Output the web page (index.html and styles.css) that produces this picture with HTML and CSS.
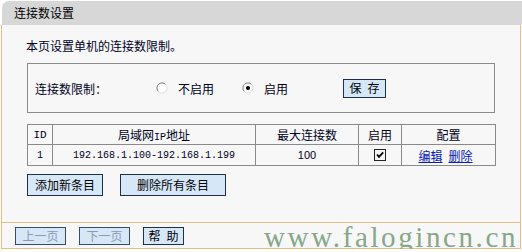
FILE: index.html
```html
<!DOCTYPE html>
<html lang="zh-CN">
<head>
<meta charset="utf-8">
<title>连接数设置</title>
<link rel="stylesheet" href="styles.css">
</head>
<body>
<div class="frame">
  <div class="title">连接数设置</div>
  <div class="main">
    <div class="content">
      <p class="desc">本页设置单机的连接数限制。</p>
      <div class="box">
        <span class="lbl">连接数限制：</span>
        <svg class="radio" width="12" height="12" viewBox="0 0 12 12"><circle cx="6" cy="6" r="5" fill="#fff"/><path d="M2.4 9.6 A5 5 0 0 1 9.6 2.4" stroke="#7a7a7a" fill="none"/><path d="M9.6 2.4 A5 5 0 0 1 2.4 9.6" stroke="#dcdcdc" fill="none"/></svg>
        <span class="opt">不启用</span>
        <svg class="radio radio-2" width="12" height="12" viewBox="0 0 12 12"><circle cx="6" cy="6" r="5" fill="#fff"/><path d="M2.4 9.6 A5 5 0 0 1 9.6 2.4" stroke="#7a7a7a" fill="none"/><path d="M9.6 2.4 A5 5 0 0 1 2.4 9.6" stroke="#dcdcdc" fill="none"/><circle cx="6" cy="6" r="2" fill="#000"/></svg>
        <span class="opt">启用</span>
        <button class="btn save">保&ensp;存</button>
      </div>
      <table class="grid">
        <colgroup><col class="c1"><col class="c2"><col class="c3"><col class="c4"><col class="c5"></colgroup>
        <tr class="head">
          <td class="mono id">ID</td>
          <td>局域网<span class="mono">IP</span>地址</td>
          <td>最大连接数</td>
          <td>启用</td>
          <td>配置</td>
        </tr>
        <tr class="row">
          <td class="mono">1</td>
          <td class="mono">192.168.1.100-192.168.1.199</td>
          <td class="num">100</td>
          <td><svg class="check" width="12" height="12" viewBox="0 0 12 12"><rect x="0.5" y="0.5" width="11" height="11" fill="#f4f4f4" stroke="#222"/><path d="M3 5.5 L5 7.8 L9.2 3.4" stroke="#000" stroke-width="1.8" fill="none"/></svg></td>
          <td class="cfg"><a href="#" class="lnk">编辑</a><a href="#" class="lnk lnk-2">删除</a></td>
        </tr>
      </table>
      <div class="actions">
        <button class="btn add">添加新条目</button>
        <button class="btn delall">删除所有条目</button>
      </div>
    </div>
    <div class="footer">
      <button class="btn fbtn off">上一页</button>
      <button class="btn fbtn off">下一页</button>
      <button class="btn fbtn help">帮&ensp;助</button>
      <span class="wm">www.falogincn.cn</span>
    </div>
  </div>
</div>
</body>
</html>
```
FILE: styles.css
```css
html, body {
  margin: 0;
  padding: 0;
  background: #fff;
}
body {
  font-family: "Noto Sans CJK SC", "Liberation Sans", sans-serif;
  font-size: 12px;
  color: #000;
}
.frame {
  width: 522px;
}
.title {
  margin: 1px 0 0 2px;
  height: 24px;
  line-height: 24px;
  padding-left: 12px;
  background: #d7d7d7;
  border-top-left-radius: 7px;
  color: #000;
}
.main {
  margin-left: 1px;
  width: 518px;
  border-left: 1px solid #e4be82;
  border-right: 1px solid #e4be82;
  border-bottom: 1px solid #e4be82;
  background: #f7f7f7;
}
.content {
  height: 197px;
  box-sizing: border-box;
  padding: 13px 0 0 25px;
}
.desc {
  margin: 0 0 0 -1px;
  line-height: 16px;
  color: #000022;
}
.box {
  margin-top: 9px;
  height: 48px;
  border: 1px solid #8c8c8c;
  display: flex;
  align-items: center;
  padding-left: 7px;
  box-sizing: content-box;
  width: 459px;
}
.lbl {
  width: 121px;
  color: #000022;
}
.radio {
  display: block;
  flex: none;
}
.radio-2 {
  margin-left: 28px;
}
.opt {
  margin-left: 10px;
  color: #000022;
}
.btn {
  font-family: "Noto Sans CJK SC", "Liberation Sans", sans-serif;
  font-size: 12px;
  background: #d6e7f8;
  border: 1px solid #1e3246;
  color: #000;
  padding: 0;
  margin: 0;
  line-height: 1;
  box-sizing: border-box;
}
.save {
  margin-left: 55px;
  width: 43px;
  height: 19px;
}
.grid {
  margin-top: 11px;
  border-collapse: collapse;
  table-layout: fixed;
  width: 468px;
}
.c1 { width: 25px; }
.c2 { width: 203px; }
.c3 { width: 103px; }
.c4 { width: 43px; }
.c5 { width: 94px; }
.grid td {
  border: 1px solid #8a8a8a;
  text-align: center;
  padding: 0;
  color: #000022;
}
.head td { height: 19px; }
.row td { height: 20px; }
.mono {
  font-family: "Liberation Mono", monospace;
  font-size: 10px;
}
.grid td.mono {
  font-size: 10px;
}
.grid td.id {
  font-size: 11px;
}
.num {
  font-family: "Liberation Sans", sans-serif;
  font-size: 11px;
}
.check {
  display: block;
  margin: 0 auto;
}
.grid td.cfg {
  padding-right: 6px;
}
.lnk {
  color: #0a1ab0;
  text-decoration: underline;
}
.lnk-2 {
  margin-left: 6px;
}
.actions {
  margin-top: 8px;
  display: flex;
  gap: 17px;
}
.add { width: 76px; height: 22px; }
.delall { width: 106px; height: 22px; }
.footer {
  position: relative;
  border-top: 1px solid #e4be82;
  height: 26px;
  box-sizing: border-box;
  padding: 4px 0 0 13px;
  display: flex;
  align-items: flex-start;
  gap: 13px;
}
.fbtn {
  width: 51px;
  height: 18px;
}
.help {
  width: 41px;
}
.off {
  color: #8c9cae;
  border-color: #3a4c5e;
}
.wm {
  position: absolute;
  right: 2px;
  bottom: -4px;
  font-family: "Liberation Serif", serif;
  font-size: 29px;
  letter-spacing: 2.6px;
  color: #86a789;
  line-height: 1;
  white-space: nowrap;
  pointer-events: none;
}
```
